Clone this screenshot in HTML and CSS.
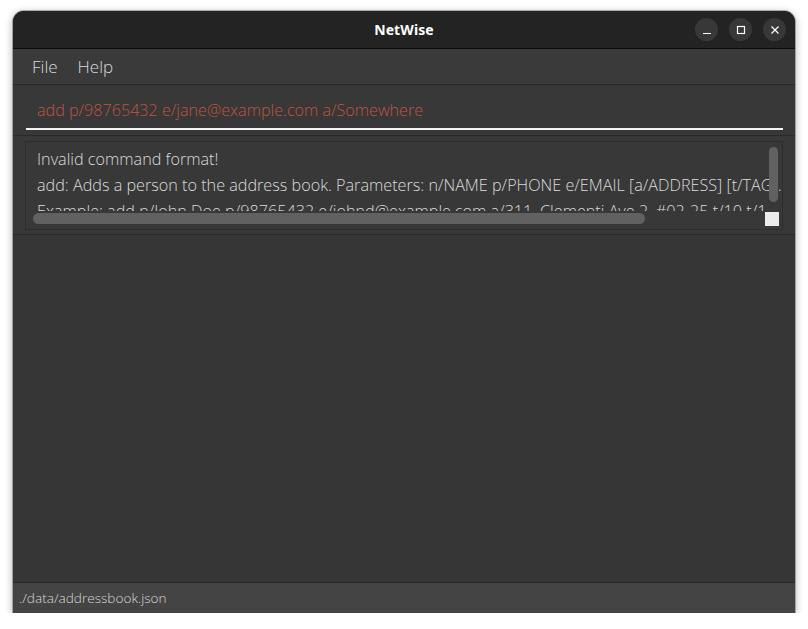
FILE: index.html
```html
<!DOCTYPE html>
<html lang="en">
<head>
<meta charset="utf-8">
<title>NetWise</title>
<link rel="stylesheet" href="styles.css">
</head>
<body>
<div class="window">
  <div class="titlebar">
    <span class="title">NetWise</span>
    <div class="controls">
      <span class="ctl"><svg width="10" height="10" viewBox="0 0 10 10"><path d="M1 8.5H9" stroke="#fff" stroke-width="1.2"/></svg></span>
      <span class="ctl"><svg width="10" height="10" viewBox="0 0 10 10"><rect x="1.5" y="1.5" width="7" height="7" fill="none" stroke="#fff" stroke-width="1.2"/></svg></span>
      <span class="ctl"><svg width="10" height="10" viewBox="0 0 10 10"><path d="M1.5 1.5L8.5 8.5M8.5 1.5L1.5 8.5" stroke="#fff" stroke-width="1.2"/></svg></span>
    </div>
  </div>
  <div class="menubar">
    <span class="menu-item">File</span>
    <span class="menu-item">Help</span>
  </div>
  <div class="command">
    <div class="command-field">add p/98765432 e/jane@example.com a/Somewhere</div>
  </div>
  <div class="result">
    <div class="result-box">
      <div class="result-text">
        <div class="line">Invalid command format!</div>
        <div class="line">add: Adds a person to the address book. Parameters: n/NAME p/PHONE e/EMAIL [a/ADDRESS] [t/TAG]...</div>
        <div class="line">Example: add n/John Doe p/98765432 e/johnd@example.com a/311, Clementi Ave 2, #02-25 t/10 t/1</div>
      </div>
      <div class="hbar">
        <span class="hthumb"></span>
        <span class="corner"></span>
      </div>
      <span class="vthumb"></span>
    </div>
  </div>
  <div class="main"></div>
  <div class="status">./data/addressbook.json</div>
</div>
</body>
</html>
```
FILE: styles.css
```css
html, body {
  margin: 0;
  padding: 0;
  background: #ffffff;
}
body {
  padding: 11px 0 0 13px;
  font-family: "Open Sans", "Noto Sans", sans-serif;
}
.window {
  width: 782px;
  height: 602px;
  display: flex;
  flex-direction: column;
  border-radius: 11px 11px 0 0;
  overflow: hidden;
  background: #373737;
  box-shadow: 0 2px 8px rgba(0,0,0,0.35), 0 0 0 1px rgba(0,0,0,0.25);
}
.titlebar {
  height: 37px;
  flex: none;
  background: #232323;
  border-bottom: 1px solid #0c0c0c;
  display: flex;
  align-items: center;
  justify-content: center;
  position: relative;
}
.title {
  color: #ffffff;
  font-family: "Noto Sans", sans-serif;
  font-weight: 700;
  font-size: 14px;
  letter-spacing: 0.1px;
}
.controls {
  position: absolute;
  right: 9px;
  top: 7px;
  display: flex;
  gap: 11px;
}
.ctl {
  width: 23px;
  height: 23px;
  border-radius: 50%;
  background: #383838;
  display: flex;
  align-items: center;
  justify-content: center;
}
.menubar {
  height: 35px;
  flex: none;
  background: #3a3a3a;
  border-bottom: 1px solid #2a2a2a;
  display: flex;
  align-items: center;
  padding-left: 19px;
  gap: 20px;
}
.menu-item {
  color: #d8d8d8;
  font-weight: 300;
  font-size: 17px;
}
.command {
  height: 51px;
  flex: none;
  background: #383838;
  border-bottom: 1px solid #2a2a2a;
  padding: 9px 12px 0 13px;
  box-sizing: border-box;
}
.command-field {
  height: 36px;
  box-sizing: border-box;
  border-bottom: 2px solid #f4f4f4;
  padding-left: 11px;
  color: #c0533f;
  font-weight: 300;
  font-size: 16.15px;
  line-height: 32px;
  white-space: nowrap;
}
.result {
  height: 99px;
  flex: none;
  background: #383838;
  border-bottom: 1px solid #2a2a2a;
  padding: 5px 12px 0 12px;
  box-sizing: border-box;
}
.result-box {
  height: 89px;
  box-sizing: border-box;
  border: 1px solid #2d2d2d;
  position: relative;
  display: flex;
  flex-direction: column;
}
.result-text {
  height: 69px;
  flex: none;
  overflow: hidden;
  padding: 4px 0 0 11px;
  box-sizing: border-box;
  color: #dcdcdc;
  font-weight: 300;
  font-size: 16.2px;
  white-space: nowrap;
}
.line {
  height: 26px;
  line-height: 26px;
}
.hbar {
  flex: 1;
  display: flex;
  align-items: flex-start;
  padding: 1px 3px 0 7px;
  justify-content: space-between;
}
.hthumb {
  width: 612px;
  height: 11px;
  margin-top: 1px;
  border-radius: 6px;
  background: #616161;
}
.corner {
  width: 14px;
  height: 14px;
  background: #ececec;
}
.vthumb {
  position: absolute;
  top: 5px;
  right: 4px;
  width: 9px;
  height: 55px;
  border-radius: 5px;
  background: #616161;
}
.main {
  flex: 1;
  background: #363636;
}
.status {
  height: 30px;
  flex: none;
  background: #444444;
  border-top: 1px solid #262626;
  color: #d8d8d8;
  font-weight: 300;
  font-size: 13.6px;
  line-height: 30px;
  padding-left: 6px;
}
```
